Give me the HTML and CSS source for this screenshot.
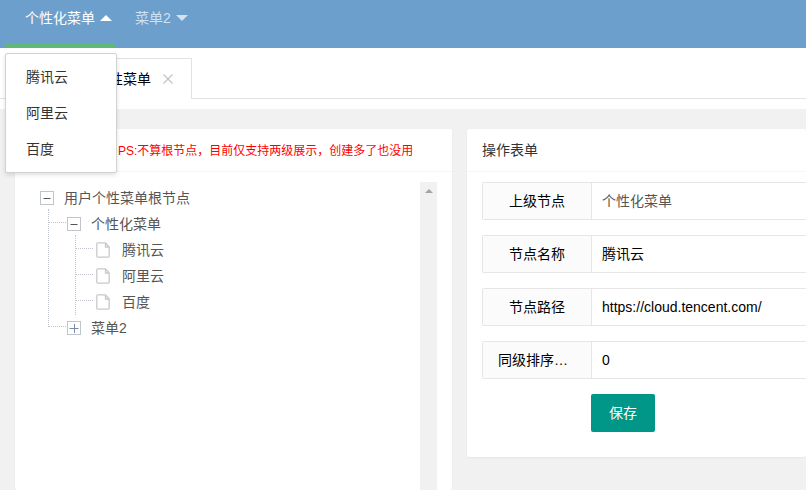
FILE: index.html
```html
<!DOCTYPE html>
<html lang="zh-CN">
<head>
  <meta charset="UTF-8" />
  <meta name="viewport" content="width=device-width, initial-scale=1.0"/>
  <title>用户个性菜单</title>
  <link rel="stylesheet" href="styles.css">
</head>
<body>

<!-- Top navigation -->
<nav class="header">
  <div class="nav-item active">
    <a href="#">个性化菜单<span class="caret caret-up"></span></a>
    <div class="nav-child">
      <a href="https://cloud.tencent.com/">腾讯云</a>
      <a href="#">阿里云</a>
      <a href="#">百度</a>
    </div>
  </div>
  <div class="nav-item">
    <a href="#">菜单2<span class="caret"></span></a>
  </div>
</nav>

<div class="tabs">
  <div class="tab">
    <span>用户个性菜单</span>
    <button class="tab-close" type="button" aria-label="关闭">
      <svg width="10" height="10" viewBox="0 0 10 10"><path d="M.5.5L9.500 9.500M9.500.5L.5 9.500" fill="none" stroke="#c2c2c2" stroke-width="1.2"/></svg>
    </button>
  </div>
</div>

<div class="main">
  <section class="card card-tree">
    <div class="card-header"><span class="tip">PS:不算根节点，目前仅支持两级展示，创建多了也没用</span></div>
    <div class="card-body tree-box">
      <div class="tree">
        <div class="node">
          <svg class="toggle" width="14" height="14" viewBox="0 0 14 14"><rect x=".5" y=".5" width="13" height="13" fill="#fff" stroke="#c0c4cc"/><path d="M3.5 7.5h7" stroke="#555"/></svg>
          <span>用户个性菜单根节点</span>
        </div>
        <ul class="branch">
          <li>
            <div class="node">
              <svg class="toggle" width="14" height="14" viewBox="0 0 14 14"><rect x=".5" y=".5" width="13" height="13" fill="#fff" stroke="#c0c4cc"/><path d="M3.5 7.5h7" stroke="#555"/></svg>
              <span>个性化菜单</span>
            </div>
            <ul class="branch leaves">
              <li><div class="node">
                <svg class="file" width="14" height="16" viewBox="0 0 14 16"><path d="M2 .8h7.500L13.200 5v9q0 1.200-1.200 1.200H2Q.8 15.200.8 14V2Q.8.8 2 .8zM9.500.8V5h3.700" fill="none" stroke="#c8c9cc" stroke-width="1.3"/></svg>
                <span>腾讯云</span>
              </div></li>
              <li><div class="node">
                <svg class="file" width="14" height="16" viewBox="0 0 14 16"><path d="M2 .8h7.500L13.200 5v9q0 1.200-1.200 1.200H2Q.8 15.200.8 14V2Q.8.8 2 .8zM9.500.8V5h3.700" fill="none" stroke="#c8c9cc" stroke-width="1.3"/></svg>
                <span>阿里云</span>
              </div></li>
              <li><div class="node">
                <svg class="file" width="14" height="16" viewBox="0 0 14 16"><path d="M2 .8h7.500L13.200 5v9q0 1.200-1.200 1.200H2Q.8 15.200.8 14V2Q.8.8 2 .8zM9.500.8V5h3.700" fill="none" stroke="#c8c9cc" stroke-width="1.3"/></svg>
                <span>百度</span>
              </div></li>
            </ul>
          </li>
          <li>
            <div class="node">
              <svg class="toggle" width="14" height="14" viewBox="0 0 14 14"><rect x=".5" y=".5" width="13" height="13" fill="#fff" stroke="#c0c4cc"/><path d="M2.500 7.500h9M7.500 3v9" stroke="#7a8ba0"/></svg>
              <span>菜单2</span>
            </div>
          </li>
        </ul>
      </div>
      <div class="scroll-track"><span class="scroll-up"></span></div>
    </div>
  </section>

  <section class="card card-form">
    <div class="card-header">操作表单</div>
    <form class="card-body">
      <div class="form-item">
        <label for="parentNode">上级节点</label>
        <input type="text" id="parentNode" class="readonly" value="个性化菜单" readonly/>
      </div>
      <div class="form-item">
        <label for="nodeName">节点名称</label>
        <input type="text" id="nodeName" value="腾讯云"/>
      </div>
      <div class="form-item">
        <label for="nodePath">节点路径</label>
        <input type="text" id="nodePath" value="https://cloud.tencent.com/"/>
      </div>
      <div class="form-item">
        <label for="nodeSort" class="label-long">同级排序…</label>
        <input type="text" id="nodeSort" value="0"/>
      </div>
      <div class="form-action">
        <button type="button" class="save">保存</button>
      </div>
    </form>
  </section>
</div>

</body>
</html>
```
FILE: styles.css
```css
* {
  box-sizing: border-box;
}
body {
  margin: 0;
  height: 100vh;
  display: flex;
  flex-direction: column;
  overflow: hidden;
  font-family: "Liberation Sans", "Noto Sans CJK SC", sans-serif;
  font-size: 14px;
  line-height: 24px;
  color: #333;
  background-color: #f1f1f1;
}
a {
  text-decoration: none;
}
ul {
  list-style: none;
  margin: 0;
  padding: 0;
}

/* Top navigation */
.header {
  display: flex;
  flex: none;
  height: 48px;
  padding-left: 5px;
  background-color: #6c9fcb;
}
.nav-item {
  position: relative;
  padding: 6px 0 0 20px;
}
.nav-item > a {
  display: flex;
  align-items: center;
  gap: 5px;
  white-space: nowrap;
  color: rgba(255,255,255,0.7);
}
.nav-item.active {
  width: 110px;
  border-bottom: 5px solid #5fb878;
}
.nav-item.active > a {
  color: #fff;
}
.caret {
  border: 6px solid transparent;
  border-top-color: currentColor;
  border-bottom-width: 0;
}
.caret-up {
  border-top-width: 0;
  border-bottom: 6px solid #fff;
}
.nav-child {
  position: absolute;
  top: 53px;
  left: 0;
  z-index: 10;
  width: 112px;
  padding: 5px 0;
  background-color: #fff;
  border: 1px solid #d2d2d2;
  border-radius: 2px;
  box-shadow: 0 2px 4px rgba(0,0,0,0.12);
}
.nav-child a {
  display: block;
  padding: 0 20px;
  line-height: 36px;
  color: #333;
}

/* Page tabs */
.tabs {
  flex: none;
  height: 61px;
  padding: 10px 0 0 51px;
  background: linear-gradient(#e2e2e2, #e2e2e2) 0 50px / 100% 1px no-repeat #fff;
}
.tab {
  display: flex;
  align-items: center;
  justify-content: space-between;
  width: 141px;
  height: 41px;
  padding: 0 18px 0 15px;
  color: #000;
  background-color: #fff;
  border: 1px solid #e2e2e2;
  border-bottom: none;
}
.tab-close {
  display: flex;
  padding: 0;
  border: none;
  background: none;
  cursor: pointer;
}

/* Cards */
.main {
  flex: 1;
  min-height: 0;
  display: flex;
  align-items: flex-start;
  gap: 15px;
  padding: 20px 0 0 15px;
}
.card {
  background-color: #fff;
  border-radius: 2px;
  box-shadow: 0 1px 2px rgba(0,0,0,0.05);
}
.card-tree {
  flex: 0 0 437px;
  align-self: stretch;
  display: flex;
  flex-direction: column;
}
.card-form {
  flex: 1;
}
.card-header {
  height: 43px;
  padding: 0 15px;
  line-height: 42px;
  white-space: nowrap;
  border-bottom: 1px solid #f6f6f6;
}
.card-tree .card-header {
  padding-left: 103px;
}
.card-body {
  padding: 10px 15px;
}
.tip {
  font-size: 12px;
  color: #f00;
}

/* Tree */
.tree-box {
  flex: 1;
  display: flex;
  justify-content: space-between;
  padding-bottom: 0;
}
.tree {
  padding: 3px 0 0 10px;
  color: #555;
}
.node {
  display: flex;
  align-items: center;
  gap: 10px;
  height: 26px;
}
.branch {
  position: relative;
  padding-left: 27px;
}
.branch::before {
  content: "";
  position: absolute;
  top: -2px;
  bottom: 14px;
  left: 8px;
  border-left: 1px dotted #c0c4cc;
}
.branch > li {
  position: relative;
}
.branch > li::before {
  content: "";
  position: absolute;
  top: 11px;
  left: -18px;
  width: 17px;
  border-top: 1px dotted #c0c4cc;
}
.leaves::before {
  bottom: 0;
}
.leaves .node {
  gap: 12px;
  padding-left: 2px;
}
.scroll-track {
  width: 17px;
  padding: 7px 5px;
  background-color: #f1f1f1;
}
.scroll-up {
  display: block;
  border: 4px solid transparent;
  border-top-width: 0;
  border-bottom-color: #a3a3a3;
}

/* Form */
.card-form form {
  padding-right: 0;
}
.form-item {
  display: flex;
  height: 38px;
  margin-bottom: 15px;
  border: 1px solid #e6e6e6;
  border-right: none;
  border-radius: 2px 0 0 2px;
}
.form-item label {
  flex: 0 0 109px;
  padding: 0 15px;
  line-height: 36px;
  text-align: center;
  white-space: nowrap;
  color: #000;
  background-color: #fbfbfb;
  border-right: 1px solid #e6e6e6;
}
.form-item .label-long {
  text-align: left;
}
.form-item input {
  flex: 1;
  min-width: 0;
  padding: 0 10px;
  font: inherit;
  color: #000;
  border: none;
  outline: none;
  background: none;
}
.form-item .readonly {
  color: #555;
}
.form-action {
  padding: 0 0 15px 109px;
}
.save {
  display: block;
  height: 38px;
  padding: 0 18px;
  font: inherit;
  color: #fff;
  background-color: #009688;
  border: none;
  border-radius: 2px;
  cursor: pointer;
}
```
